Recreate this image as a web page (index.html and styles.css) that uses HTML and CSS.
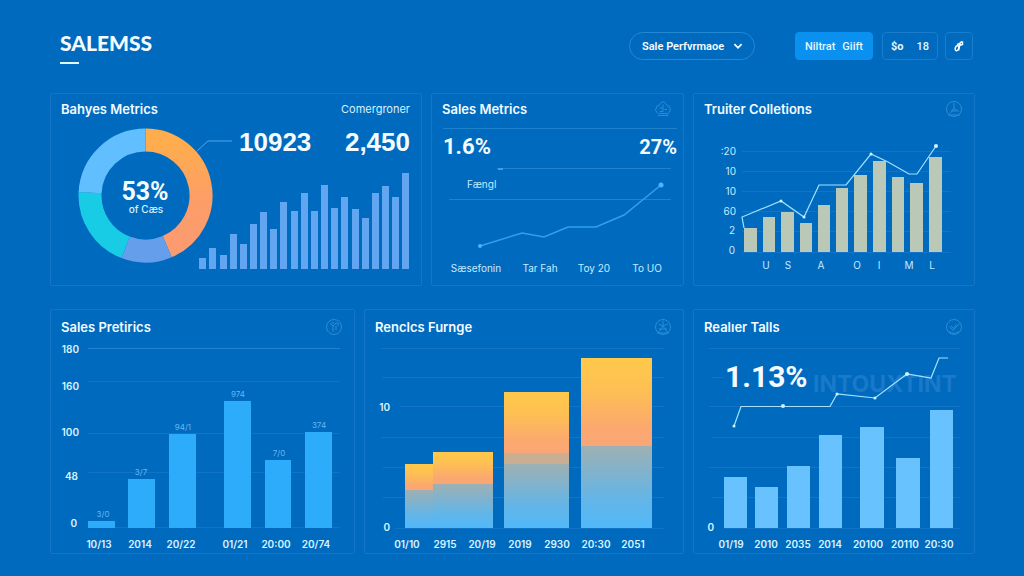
FILE: index.html
```html
<!DOCTYPE html>
<html lang="en">
<head>
<meta charset="utf-8">
<meta name="viewport" content="width=device-width, initial-scale=1">
<title>SALEMSS</title>
<link rel="stylesheet" href="styles.css">
</head>
<body>
<header class="topbar">
  <h1 class="brand">SALEMSS</h1>
  <div class="tools">
    <div class="picker">
      <select class="picker-select" aria-label="View"><option>Sale Perfvrmaoe</option></select>
      <svg class="chevron" viewBox="0 0 10 10" aria-hidden="true"><path d="M2 3.5 5 6.5 8 3.5"/></svg>
    </div>
    <button class="btn btn-primary" type="button"><span>Niltrat</span><span>Giift</span></button>
    <button class="btn btn-range" type="button"><span class="strong">$o</span><span>18</span></button>
    <button class="btn btn-icon" type="button" aria-label="Share">
      <svg class="note" viewBox="0 0 14 14" aria-hidden="true"><ellipse cx="5" cy="9.2" rx="1.7" ry="2.6" transform="rotate(20 5 9.2)"/><path d="M6.500 11.500 8.300 3.500 10.500 2.500M7.500 6.500 10.500 5.500V2.500M5 5.500 8 4.500"/></svg>
    </button>
  </div>
</header>

<main class="board">
  <div class="row row-top">
    <section class="card">
      <div class="card-head"><h2 class="title">Bahyes Metrics</h2><span class="note-text">Comergroner</span></div>
      <svg class="chart" viewBox="51 125 370 160" role="img" aria-label="Share and volume">
        <defs>
          <linearGradient id="orange" x1="0" y1="0" x2="0" y2="1"><stop offset="0" stop-color="#ffad4c"/><stop offset=".6" stop-color="#fc9d68"/><stop offset="1" stop-color="#fb9b70"/></linearGradient>
        </defs>
        <g class="ring">
          <path class="ring-orange" d="M145.500 140A55.500 55.500 0 0 1 167.200 246.600"/>
          <path class="ring-violet" d="M167.200 246.600A55.500 55.500 0 0 1 125.600 247.300"/>
          <path class="ring-teal" d="M125.600 247.300A55.500 55.500 0 0 1 90.100 192.600"/>
          <path class="ring-sky" d="M90.100 192.600A55.500 55.500 0 0 1 145.500 140"/>
        </g>
        <path class="leader" d="M197 151 208 141H232"/>
        <text class="ring-value mid" x="145" y="200">53%</text>
        <text class="ring-label mid" x="146" y="213">of Cæs</text>
        <text class="figure" x="239" y="151">10923</text>
        <text class="figure end" x="410" y="151">2,450</text>
        <path class="bars-violet" d="M199 269v-11h7v11zM209 269v-21h7v21zM220 269v-14h7v14zM230 269v-35h7v35zM240 269v-25h7v25zM250 269v-45h7v45zM260 269v-57h7v57zM270 269v-40h7v40zM280 269v-67h7v67zM291 269v-58h7v58zM301 269v-76h7v76zM311 269v-58h7v58zM321 269v-84h7v84zM331 269v-61h7v61zM341 269v-72h7v72zM352 269v-60h7v60zM362 269v-51h7v51zM372 269v-76h7v76zM382 269v-83h7v83zM392 269v-72h7v72zM402 269v-96h7v96z"/>
      </svg>
    </section>

    <section class="card">
      <div class="card-head"><h2 class="title">Sales Metrics</h2>
        <svg class="badge" viewBox="0 0 18 18" aria-hidden="true"><path d="M4 15.500h10M4.500 13.500h9v2M3.500 13.500 1.500 10 3 6 5.500 5 7 2.500 9 1.800 11 2.500 12.500 5 15 6 16.500 10 14.500 13.500M9 4.500v7M5.500 8h3M10.500 9.500h2.500M6 11.500h3"/></svg>
      </div>
      <div class="stats"><span>1.6%</span><span class="stat-side">27%</span></div>
      <svg class="chart" viewBox="432 164 251 121" role="img" aria-label="Sales trend">
        <path class="grid-line bright" d="M497 168.500H671M449 199.500H671"/>
        <path class="nub" d="M498 169h5"/>
        <text class="tick" x="467" y="188">Fængl</text>
        <path class="trend" d="M480 246 522 233 544 237 568 227H596L624 215 661 185"/>
        <g class="trend-dots"><circle cx="480" cy="246" r="2"/><circle cx="661" cy="185" r="2.500"/></g>
        <g class="tick mid"><text x="476" y="272">Sæsefonin</text><text x="540" y="272">Tar Fah</text><text x="594" y="272">Toy 20</text><text x="647" y="272">To UO</text></g>
      </svg>
    </section>

    <section class="card">
      <div class="card-head"><h2 class="title">Truiter Colletions</h2>
        <svg class="badge" viewBox="0 0 18 18" aria-hidden="true"><circle cx="9" cy="9" r="7.500"/><path d="M9 3v5.500L5 13.500M9 8.500l5 3M9 8.500 6.500 11H12M3 15h12"/></svg>
      </div>
      <svg class="chart" viewBox="694 125 280 160" role="img" aria-label="Collections by month">
        <path class="grid-line" d="M742 151.500H951M742 171.500H951M742 191.500H951M742 211.500H951M742 231.500H951M742 252.500H951"/>
        <path class="bars-sand" d="M744 252v-24h13v24zM763 252v-35h12v35zM781 252v-40h13v40zM800 252v-29h12v29zM818 252v-47h12v47zM836 252v-64h12v64zM854 252v-77h13v77zM873 252v-91h13v91zM892 252v-75h12v75zM910 252v-69h13v69zM929 252v-95h13v95z"/>
        <path class="line-pale" d="M744 228 742 217 781 201 804 217 819 185H846L871 154 888 162 909 174H917L936 146"/>
        <g class="dots-pale"><circle cx="781" cy="201" r="1.500"/><circle cx="804" cy="217" r="1.500"/><circle cx="871" cy="154" r="1.500"/><circle cx="936" cy="146" r="2"/></g>
        <g class="tick end"><text x="736" y="155">:20</text><text x="736" y="175">10</text><text x="736" y="195">10</text><text x="736" y="215">60</text><text x="735" y="234">2</text><text x="735" y="254">0</text></g>
        <g class="tick mid"><text x="766" y="269">U</text><text x="788" y="269">S</text><text x="821" y="269">A</text><text x="857" y="269">O</text><text x="879" y="269">I</text><text x="909" y="269">M</text><text x="932" y="269">L</text></g>
      </svg>
    </section>
  </div>

  <div class="row row-bottom">
    <section class="card">
      <div class="card-head"><h2 class="title">Sales Pretirics</h2>
        <svg class="badge" viewBox="0 0 18 18" aria-hidden="true"><circle cx="9" cy="9" r="7.500"/><path d="M5 5.500 8 8v6M8 8l3-3h2v3M11 8v4M6.500 5H9"/></svg>
      </div>
      <svg class="chart" viewBox="51 344 303 209" role="img" aria-label="Sales by period">
        <path class="grid-line bright" d="M88 348.500H340"/>
        <path class="grid-line" d="M88 381.500H340M88 433.500H340M88 472.500H340M88 527.500H340"/>
        <path class="bars-azure" d="M88 528v-7h27v7zM128 528v-49h27v49zM169 528v-94h27v94zM224 528v-127h27v127zM265 528v-68h26v68zM305 528v-96h27v96z"/>
        <g class="bar-value mid"><text x="103" y="517">3/0</text><text x="141" y="475">3/7</text><text x="183" y="430">94/1</text><text x="238" y="397">974</text><text x="279" y="456">7/0</text><text x="319" y="428">374</text></g>
        <g class="tick bold end"><text x="79" y="353">180</text><text x="79" y="390">160</text><text x="79" y="436">100</text><text x="78" y="480">48</text><text x="77" y="527">0</text></g>
        <g class="tick bold mid"><text x="99" y="548">10/13</text><text x="140" y="548">2014</text><text x="181" y="548">20/22</text><text x="235" y="548">01/21</text><text x="276" y="548">20:00</text><text x="316" y="548">20/74</text></g>
      </svg>
    </section>

    <section class="card">
      <div class="card-head"><h2 class="title">Renclcs Furnge</h2>
        <svg class="badge" viewBox="0 0 18 18" aria-hidden="true"><circle cx="9" cy="9" r="7.500"/><path d="M9 2.500v5.500M9 8 4.500 6M9 8l5-2M9 8l-5 7M9 8l5 7M3 15h12M5 11h8"/></svg>
      </div>
      <svg class="chart" viewBox="365 344 318 209" role="img" aria-label="Range by year">
        <defs>
          <linearGradient id="warm" x1="0" y1="0" x2="0" y2="1"><stop offset="0" stop-color="#ffc94a"/><stop offset=".35" stop-color="#fec053"/><stop offset=".8" stop-color="#fba86f"/><stop offset="1" stop-color="#f9a678"/></linearGradient>
          <linearGradient id="cool" x1="0" y1="0" x2="0" y2="1"><stop offset="0" stop-color="#9eb0b3"/><stop offset=".65" stop-color="#63b5e7"/><stop offset="1" stop-color="#51b8f9"/></linearGradient>
        </defs>
        <path class="grid-line" d="M381 348.500H664M382 377.500H664M400 406.500H664M381 437.500H664M383 467.500H664M383 497.500H664M395 528.500H664"/>
        <g class="warm"><path d="M405 464h28v27h-28z"/><path d="M433 452h60v32h-60z"/><path d="M504 392h65v62h-65z"/><path d="M581 358h71v88h-71z"/></g>
        <g class="cool"><path d="M405 490h28v38h-28z"/><path d="M433 484h60v44h-60z"/><path d="M504 464h65v64h-65z"/><path d="M581 446h71v82h-71z"/></g>
        <path class="tan" d="M504 453h65v11h-65z"/>
        <g class="tick bold end"><text x="390" y="411">10</text><text x="390" y="531">0</text></g>
        <g class="tick bold mid"><text x="407" y="548">01/10</text><text x="445" y="548">2915</text><text x="482" y="548">20/19</text><text x="520" y="548">2019</text><text x="557" y="548">2930</text><text x="596" y="548">20:30</text><text x="633" y="548">2051</text></g>
      </svg>
    </section>

    <section class="card">
      <div class="card-head"><h2 class="title">Realıer Talls</h2>
        <svg class="badge" viewBox="0 0 18 18" aria-hidden="true"><circle cx="9" cy="9" r="7.500"/><path d="M4.500 8.500 8 12.500 14.500 5.500M6 8l2.500 2.500 3-4M4 13.500Q9 17 14 13.500"/></svg>
      </div>
      <svg class="chart" viewBox="694 344 280 209" role="img" aria-label="Totals by period">
        <path class="grid-line" d="M709 348.500H960M712 377.500H724M709 406.500H960M712 437.500H960M709 467.500H960M712 497.500H960M724 528.500H960"/>
        <text class="watermark" x="813" y="392">INTOUXTINT</text>
        <text class="figure large" x="725" y="387">1.13%</text>
        <path class="bars-sky" d="M724 528v-51h23v51zM755 528v-41h23v41zM787 528v-62h23v62zM819 528v-93h23v93zM860 528v-101h24v101zM896 528v-70h24v70zM930 528v-118h23v118z"/>
        <path class="line-pale" d="M734 426 741 406.500H830L837 394 875 398 907 374 931 378 939 358H948"/>
        <g class="dots-pale"><circle cx="734" cy="426" r="1.500"/><circle cx="783" cy="406" r="2"/><circle cx="837" cy="394" r="1.500"/><circle cx="875" cy="398" r="1.500"/><circle cx="907" cy="374" r="2"/></g>
        <text class="tick bold end" x="714" y="531">0</text>
        <g class="tick bold mid"><text x="731" y="548">01/19</text><text x="766" y="548">2010</text><text x="798" y="548">2035</text><text x="830" y="548">2014</text><text x="868" y="548">20100</text><text x="905" y="548">20110</text><text x="939" y="548">20:30</text></g>
      </svg>
    </section>
  </div>
</main>
</body>
</html>
```
FILE: styles.css
```css
* { box-sizing: border-box; }
body {
  margin: 0;
  background: #006abf;
  color: #f4fcff;
  font-family: Roboto, "Liberation Sans", sans-serif;
}
.topbar {
  display: flex;
  justify-content: space-between;
  align-items: flex-start;
  padding: 31px 51px 0 60px;
  margin-bottom: 29px;
}
.brand {
  margin: 0;
  font-family: Lato, "Liberation Sans", sans-serif;
  font-size: 21px;
  line-height: 24px;
  font-weight: 900;
}
.brand::after {
  content: "";
  display: block;
  width: 19px;
  height: 2px;
  margin-top: 7px;
  background: #e6f8ff;
}
.tools { display: flex; padding-top: 1px; }
.picker {
  display: flex;
  align-items: center;
  position: relative;
  margin-right: 40px;
}
.picker-select {
  appearance: none;
  width: 126px;
  height: 28px;
  padding: 0 24px 0 12px;
  border: 1px solid #2489d4;
  border-radius: 14px;
  background: transparent;
  color: inherit;
  font: 600 11px Roboto, sans-serif;
}
.picker-select option { color: #003a70; }
.chevron {
  position: absolute;
  right: 11px;
  width: 12px;
  height: 12px;
  fill: none;
  stroke: #f4fcff;
  stroke-width: 1.5;
  pointer-events: none;
}
.btn {
  display: flex;
  align-items: center;
  justify-content: space-between;
  height: 28px;
  padding: 0 8px;
  border: 1px solid #1a7dcc;
  border-radius: 4px;
  background: transparent;
  color: #e3f7ff;
  font: 500 11px Roboto, sans-serif;
}
.btn-primary {
  width: 78px;
  padding: 0 9px;
  margin-right: 9px;
  border-color: #0a90ee;
  background: #0a90ee;
}
.btn-range { width: 56px; margin-right: 7px; }
.strong { font-weight: 700; }
.btn-icon { width: 28px; padding: 0 6px; }
.note { width: 14px; height: 14px; fill: none; stroke: #f4fcff; stroke-width: 1.5; }

.board { display: grid; gap: 23px; padding: 0 49px 22px 50px; }
.row { display: grid; gap: 9px; align-items: start; }
.row-top { grid-template-columns: minmax(0, 372fr) minmax(0, 253fr) minmax(0, 282fr); }
.row-bottom { grid-template-columns: minmax(0, 305fr) minmax(0, 320fr) minmax(0, 282fr); }
.card { border: 1px solid #1576c7; border-radius: 2px; background: #006abf; }
.card-head {
  display: flex;
  justify-content: space-between;
  align-items: center;
  height: 31px;
  padding: 0 11px 2px 10px;
}
.row-bottom .card-head { height: 34px; padding-bottom: 0; }
.title { margin: 0; font: 600 13px Inter, sans-serif; }
.note-text { font: 400 11px Inter, sans-serif; color: #d3f2ff; }
.badge { width: 18px; height: 18px; fill: none; stroke: #2b8dd6; stroke-width: 1; }
.stats {
  display: flex;
  justify-content: space-between;
  align-items: center;
  height: 36px;
  margin: 3px 6px 0 11px;
  border-top: 1px solid #1f80cc;
  font-size: 22px;
  font-weight: 700;
}
.stat-side { font-size: 20px; }

.chart { display: block; width: 100%; height: auto; }
.mid { text-anchor: middle; }
.end { text-anchor: end; }
.figure { fill: #f4fcff; font: 700 26px "Liberation Sans", sans-serif; }
.large { font: 700 30px Roboto, sans-serif; }
.ring { fill: none; stroke-width: 23; }
.ring-orange { stroke: url(#orange); }
.ring-violet { stroke: #659fec; }
.ring-teal { stroke: #19cce6; }
.ring-sky { stroke: #62bfff; }
.ring-value { fill: #f4fcff; font: 700 25px Roboto, sans-serif; }
.ring-label { fill: #d3f2ff; font: 500 10px Inter, sans-serif; }
.leader { fill: none; stroke: #4ba6e8; }
.bars-violet { fill: #62a5f0; }
.bars-sand { fill: #b9c8b7; }
.bars-azure { fill: #2eacfc; }
.bars-sky { fill: #68c2fd; }
.grid-line { fill: none; stroke: #1274c5; }
.bright { stroke: #2382cf; }
.nub { stroke: #3da0ea; stroke-width: 2; }
.trend { fill: none; stroke: #2ea1f1; stroke-width: 1.5; }
.trend-dots { fill: #4bb5fa; }
.line-pale { fill: none; stroke: #a4e2ff; stroke-width: 1.2; }
.dots-pale { fill: #d3f2ff; }
.tick { fill: #c5eaff; font: 400 10px Inter, sans-serif; }
.bold { fill: #d9f4ff; font-weight: 600; }
.bar-value { fill: #64b7f1; font: 400 8px Inter, sans-serif; }
.warm path { fill: url(#warm); }
.cool path { fill: url(#cool); }
.tan { fill: #c9ae92; }
.watermark { fill: #1a79c8; font: 700 23px Inter, sans-serif; }
```
